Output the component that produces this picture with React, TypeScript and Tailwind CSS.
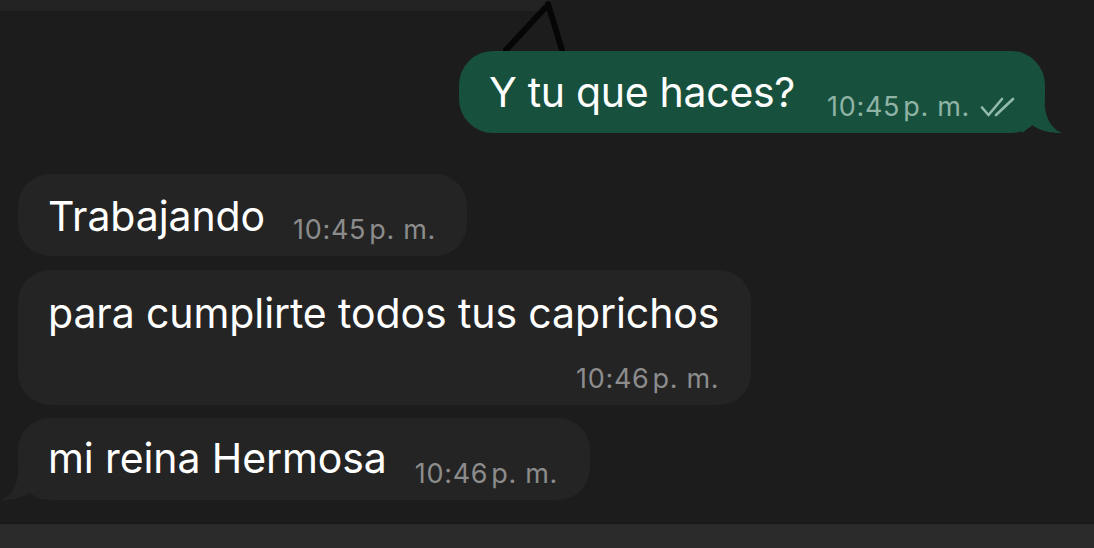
import React from "react";

function Checks() {
  return (
    <svg width="36" height="22" viewBox="0 0 36 22" fill="none" className="mb-[15px] ml-[10px]">
      <path d="M2 11.5 L8.5 19 L22 3" stroke="#93bbab" strokeWidth="2.6" strokeLinecap="round" strokeLinejoin="round" />
      <path d="M16 19 L33 3" stroke="#93bbab" strokeWidth="2.6" strokeLinecap="round" strokeLinejoin="round" />
    </svg>
  );
}

function Time({ t, green }: { t: string; green?: boolean }) {
  return (
    <span
      className={`block whitespace-nowrap text-[27px] leading-[32px] tracking-[0.7px] mb-[10px] ${green ? "text-[#8fb3a4]" : "text-[#8c8c8c]"}`}
    >
      {t}
      <span className="ml-[3px]">p. m.</span>
    </span>
  );
}

export default function App() {
  return (
    <div
      className="relative w-[1094px] h-[548px] overflow-hidden bg-[#1c1c1c] flex flex-col text-white"
      style={{ fontFamily: "Inter, 'Noto Sans', sans-serif" }}
    >
      {/* top partial bubble */}
      <div className="h-[11px] w-[550px] bg-[#232323] rounded-br-[12px] shrink-0" />
      {/* scribble */}
      <svg className="absolute left-[495px] top-0" width="80" height="54" viewBox="0 0 80 54" fill="none">
        <path d="M11 50 L50 8" stroke="#060606" strokeWidth="6" strokeLinecap="round" />
        <path d="M53 4 L67 50" stroke="#060606" strokeWidth="6" strokeLinecap="round" />
      </svg>

      {/* sent bubble */}
      <div className="flex justify-end pr-[49px] mt-[40px] shrink-0">
        <div className="relative h-[82px] bg-[#17513e] rounded-[34px] flex items-end pl-[30px] pr-[29px]">
          <span className="text-[41px] leading-[48px] mb-[17px] whitespace-nowrap tracking-[-0.3px]">Y tu que haces?</span>
          <span className="ml-[32px] flex items-end">
            <Time t="10:45" green />
            <Checks />
          </span>
          <svg className="absolute right-[-17px] bottom-0" width="40" height="40" viewBox="0 0 40 40">
            <path d="M0 0 L22 0 C22 20 26 34 40 40 C28 40 18 38 10 32 L0 40 Z" fill="#17513e" />
          </svg>
        </div>
      </div>

      {/* received */}
      <div className="flex flex-col items-start pl-[18px] mt-[41px] gap-[14px]">
        <div className="h-[82px] bg-[#242424] rounded-[32px] flex items-end pl-[30px] pr-[31px]">
          <span className="text-[41px] leading-[48px] mb-[16px] whitespace-nowrap tracking-[-0.1px]">Trabajando</span>
          <span className="ml-[28px] flex items-end">
            <Time t="10:45" />
          </span>
        </div>
        <div className="h-[135px] bg-[#242424] rounded-[32px] flex flex-col pl-[30px] pr-[32px]">
          <span className="text-[41px] leading-[48px] mt-[19px] whitespace-nowrap tracking-[-0.1px]">
            para cumplirte todos tus caprichos
          </span>
          <span className="self-end mt-auto flex items-end">
            <Time t="10:46" />
          </span>
        </div>
        <div className="relative -mt-[1px] h-[82px] bg-[#242424] rounded-[32px] flex items-end pl-[30px] pr-[32px]">
          <span className="text-[41px] leading-[48px] mb-[18px] whitespace-nowrap tracking-[-0.1px]">mi reina Hermosa</span>
          <span className="ml-[28px] flex items-end">
            <Time t="10:46" />
          </span>
          <svg className="absolute left-[-17px] bottom-0" width="40" height="40" viewBox="0 0 40 40">
            <path d="M40 0 L18 0 C18 20 14 34 0 40 C12 40 22 38 30 32 L40 40 Z" fill="#242424" />
          </svg>
        </div>
      </div>

      {/* bottom bar */}
      <div className="mt-auto h-[25px] bg-[#2a2a2a] border-t border-[#181818] shrink-0" />
    </div>
  );
}
